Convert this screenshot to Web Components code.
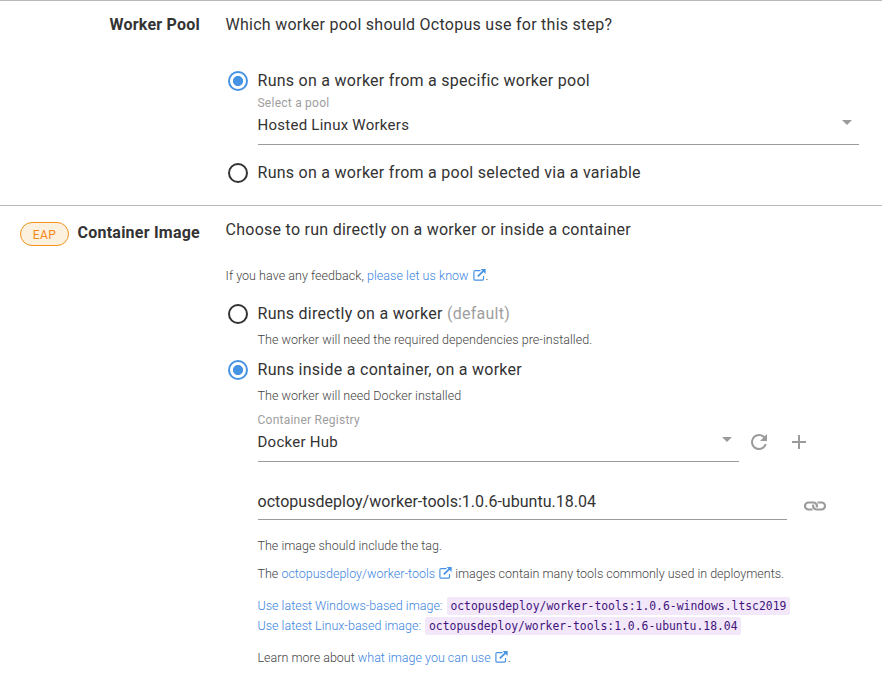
<!DOCTYPE html>
<html lang="en">
<head>
<meta charset="utf-8">
<title>Worker settings</title>
<style>
body { margin: 0; background: #fff; color: #333; font-family: Roboto, "Liberation Sans", sans-serif; font-size: 16px; }
</style>
</head>
<body>
<worker-settings></worker-settings>
<script>
const define = (name, html, setup) => customElements.define(name, class extends HTMLElement {
  constructor() {
    super();
    this.attachShadow({ mode: 'open' }).innerHTML = html;
  }
  connectedCallback() { if (setup) setup(this, this.shadowRoot); }
});

define('form-section', `<style>
  :host { display: grid; grid-template-columns: 200px minmax(0, 1fr); column-gap: 25.5px; border-top: 1px solid #b9b9b9; box-sizing: border-box; }
  .label { display: flex; justify-content: flex-end; align-items: flex-start; gap: 8.6px; padding-top: var(--label-top, 12px); font-weight: 700; line-height: 24px; letter-spacing: .23px; white-space: nowrap; }
  .body { padding-top: 12px; }
</style><div class="label"><slot name="label"></slot></div><div class="body"><slot></slot></div>`);

define('eap-badge', `<style>
  :host { display: flex; align-items: center; justify-content: center; box-sizing: border-box; width: 49px; height: 24px; margin-top: 1px; border: 1px solid #f3941a; border-radius: 12px; background: #fcf0de; color: #f2881a; font-size: 12px; font-weight: 400; letter-spacing: .4px; padding-top: 1px; }
</style><slot></slot>`);

define('radio-option', `<style>
  :host { display: flex; align-items: center; gap: 9.5px; height: 24px; padding-left: 2.5px; line-height: 24px; letter-spacing: .268px; white-space: nowrap; }
  i { box-sizing: border-box; flex: none; width: 20px; height: 20px; border: 2px solid #333; border-radius: 50%; }
  :host([checked]) i { border-color: #4793e3; background: radial-gradient(circle, #4793e3 4.7px, transparent 5.4px); }
</style><i></i><span><slot></slot></span>`);

define('select-field', `<style>
  :host { display: block; box-sizing: border-box; border-bottom: 1px solid #9b9b9b; height: 50px; white-space: nowrap; }
  .l { color: #9e9e9e; font-size: 12px; line-height: 16px; letter-spacing: .24px; }
  .v { display: flex; justify-content: space-between; align-items: center; font-size: 15px; line-height: 24px; letter-spacing: .26px; margin-top: 2px; padding-right: 6px; }
  svg { display: block; margin-top: -6px; }
</style><div class="l"><slot name="label"></slot></div><div class="v"><slot></slot><svg width="12" height="6"><path d="M1 1h10l-5 5z" fill="#9b9b9b"/></svg></div>`);

define('text-field', `<style>
  :host { display: block; box-sizing: border-box; height: 30px; border-bottom: 1px solid #9b9b9b; line-height: 24px; letter-spacing: .03px; white-space: nowrap; }
</style><slot></slot>`);

define('help-text', `<style>
  :host { display: block; font-size: 12.5px; font-weight: 300; line-height: 20px; height: 20px; color: #444; letter-spacing: var(--help-ls, .01px); white-space: nowrap; }
</style><slot></slot>`);

define('text-link', `<style>
  :host { color: #3b84de; }
  svg { display: inline-block; vertical-align: -1px; margin-left: 4px; }
</style><slot></slot>`, (el, root) => {
  if (el.hasAttribute('external')) root.innerHTML += `<svg width="13" height="12" viewBox="0 0 13 12" fill="none" stroke="#4793e3"><path d="M7.5 1.6H2.2Q.9 1.6.9 2.9v7Q.9 11.2 2.2 11.2h7q1.3 0 1.3-1.3V7" stroke-width="1.2"/><path d="M4.8 7.3 10.5 1.8" stroke-width="1.8"/><path d="M7.6 0h5v5z" fill="#4793e3" stroke="none"/></svg>`;
});

define('code-chip', `<style>
  :host { display: inline-block; box-sizing: border-box; height: 18px; padding: 0 3.5px; margin-left: 1.3px; border-radius: 2px; background: #f2e8f9; color: #43137d; font: 400 11.4px/18px "DejaVu Sans Mono", "Liberation Mono", monospace; letter-spacing: 0; vertical-align: top; margin-top: 1px; }
</style><slot></slot>`);

const icons = {
  refresh: '<path d="M17.65 6.35A7.958 7.958 0 0 0 12 4a8 8 0 1 0 7.73 10h-2.08A6 6 0 1 1 12 6c1.66 0 3.14.69 4.22 1.78L13 11h7V4z"/>',
  add: '<path d="M19 13h-6v6h-2v-6H5v-2h6V5h2v6h6z"/>',
  link: '<g fill="none" stroke="#9b9b9b" stroke-width="2.2"><path d="M9.5 15.5H5.5A3.5 3.5 0 0 1 5.5 8.5H10.5A3.5 3.5 0 0 1 13.6 13.4"/><path d="M14.5 8.5H18.5A3.5 3.5 0 0 1 18.5 15.5H13.5A3.5 3.5 0 0 1 10.4 10.6"/></g>'
};
define('icon-glyph', `<style>:host { display: block; width: 24px; height: 24px; } svg { display: block; }</style>`, (el, root) => {
  root.innerHTML += `<svg width="24" height="24" viewBox="0 0 24 24" fill="#9b9b9b">${icons[el.getAttribute('name')]}</svg>`;
});

define('worker-settings', `<style>
  :host { display: block; height: 684px; overflow: hidden; }
  .s1 { height: 205px; }
  .s2 { --label-top: 15px; }
  .title { line-height: 24px; letter-spacing: .266px; }
  .indent { margin-left: 32px; }
  .wide { --help-ls: .045px; }
  .row { display: flex; align-items: flex-start; }
  .muted { color: #9e9e9e; }
</style>
<form-section class="s1">
  <span slot="label">Worker Pool</span>
  <div class="title">Which worker pool should Octopus use for this step?</div>
  <radio-option checked style="margin-top:32px">Runs on a worker from a specific worker pool</radio-option>
  <select-field class="indent" style="margin-top:2px;margin-right:23px"><span slot="label">Select a pool</span>Hosted Linux Workers</select-field>
  <radio-option style="margin-top:16px">Runs on a worker from a pool selected via a variable</radio-option>
</form-section>
<form-section class="s2">
  <eap-badge slot="label">EAP</eap-badge><span slot="label">Container Image</span>
  <div class="title">Choose to run directly on a worker or inside a container</div>
  <help-text class="wide" style="margin-top:24px">If you have any feedback, <text-link external>please let us know</text-link>.</help-text>
  <radio-option style="margin-top:16px">Runs directly on a worker <span class="muted">(default)</span></radio-option>
  <help-text class="indent wide" style="margin-top:4px">The worker will need the required dependencies pre-installed.</help-text>
  <radio-option checked style="margin-top:8px">Runs inside a container, on a worker</radio-option>
  <help-text class="indent wide" style="margin-top:4px">The worker will need Docker installed</help-text>
  <div class="row indent" style="margin-top:6px">
    <select-field style="width:481px"><span slot="label">Container Registry</span>Docker Hub</select-field>
    <icon-glyph name="refresh" style="margin:18px 0 0 8.5px"></icon-glyph>
    <icon-glyph name="add" style="margin:18px 0 0 16px"></icon-glyph>
  </div>
  <div class="row indent" style="margin-top:28px">
    <text-field style="width:529px">octopusdeploy/worker-tools:1.0.6-ubuntu.18.04</text-field>
    <icon-glyph name="link" style="margin:4px 0 0 16.5px"></icon-glyph>
  </div>
  <help-text class="indent" style="margin-top:16px">The image should include the tag.</help-text>
  <help-text class="indent" style="margin-top:8px">The <text-link external>octopusdeploy/worker-tools</text-link> images contain many tools commonly used in deployments.</help-text>
  <help-text class="indent" style="margin-top:12px"><text-link>Use latest Windows-based image:</text-link> <code-chip>octopusdeploy/worker-tools:1.0.6-windows.ltsc2019</code-chip></help-text>
  <help-text class="indent"><text-link>Use latest Linux-based image:</text-link> <code-chip>octopusdeploy/worker-tools:1.0.6-ubuntu.18.04</code-chip></help-text>
  <help-text class="indent" style="margin-top:12px">Learn more about <text-link external>what image you can use</text-link>.</help-text>
</form-section>`);
</script>
</body>
</html>
